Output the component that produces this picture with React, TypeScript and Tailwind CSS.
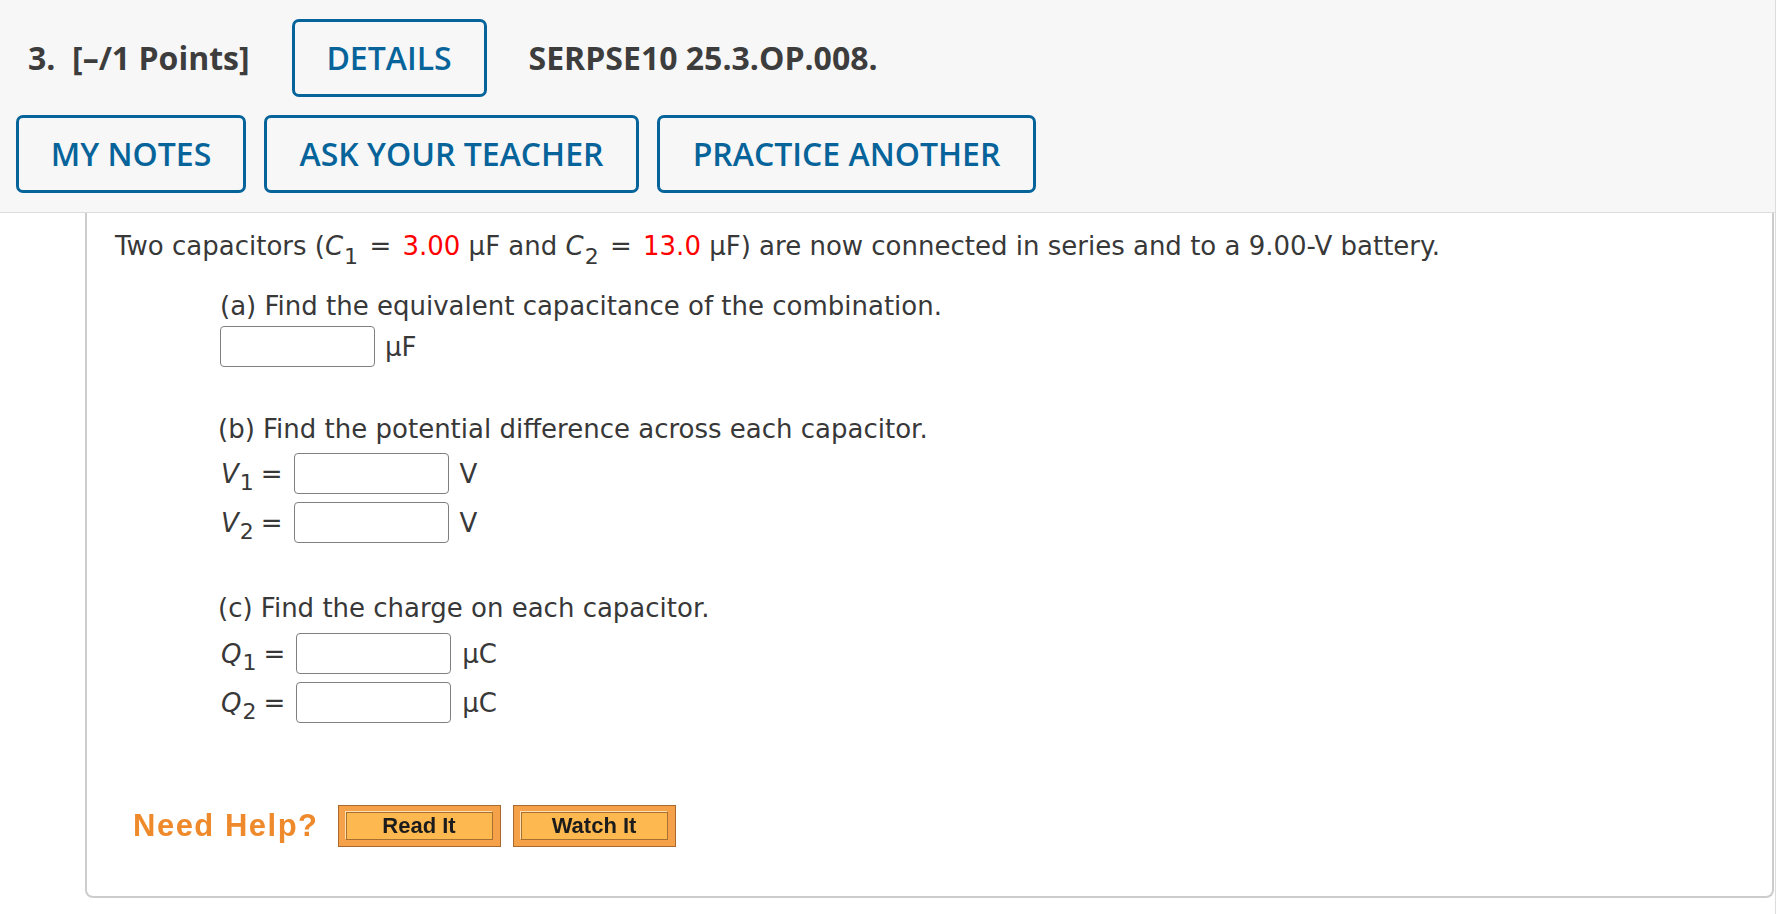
const Sub = ({ children }: { children: React.ReactNode }) => (
  <span className="relative top-[9px] ml-[1px] text-[22px] leading-none">
    {children}
  </span>
);

const Red = ({ children }: { children: React.ReactNode }) => (
  <span className="text-[#f00]">{children}</span>
);

const OutlineBtn = ({ label, w }: { label: string; w: string }) => (
  <button
    className={`${w} h-[78px] shrink-0 rounded-[7px] border-[3px] border-[#07649a] text-[32px] font-semibold text-[#07649a]`}
  >
    {label}
  </button>
);

const AnswerBox = () => (
  <input
    type="text"
    className="h-[41px] w-[155px] rounded-[4px] border-[1.5px] border-[#7f7f7f] bg-white outline-none"
  />
);

const MathRow = ({ sym, n, unit }: { sym: string; n: string; unit: string }) => (
  <div className="flex h-[41px] items-center">
    <span className="italic">{sym}</span>
    <Sub>{n}</Sub>
    <span className="ml-[7px] mr-[11px]">=</span>
    <AnswerBox />
    <span className="ml-[11px]">{unit}</span>
  </div>
);

const HelpBtn = ({ label }: { label: string }) => (
  <button className="h-[42px] w-[163px] shrink-0 border border-[#a9692c] bg-[#f5a14a] px-[7px] py-[6px]">
    <span className="flex h-full items-center justify-center border border-[#a8702f] bg-[#fdb94f] font-['Liberation_Sans',Arial,sans-serif] text-[22px] font-bold text-[#1c1c1c] shadow-[-1px_-1px_0_#ffe0b5] blur-[0.3px]">
      {label}
    </span>
  </button>
);

export default function App() {
  return (
    <div className="min-h-[914px] w-[1776px] border-r border-[#dcdcdc] bg-white">
      <header className="h-[213px] border-b border-[#dddddd] bg-[#f7f7f7] font-['Open_Sans',sans-serif]">
        <div className="flex items-center pt-[19px]">
          <span className="ml-[28px] whitespace-pre text-[32px] font-bold text-[#3d3d3d]">
            3.  [–/1 Points]
          </span>
          <div className="ml-[42px]">
            <OutlineBtn label="DETAILS" w="w-[195px]" />
          </div>
          <span className="ml-[42px] text-[32px] font-bold text-[#3d3d3d]">
            SERPSE10 25.3.OP.008.
          </span>
        </div>
        <div className="mt-[18px] flex gap-[18px] pl-[16px]">
          <OutlineBtn label="MY NOTES" w="w-[230px]" />
          <OutlineBtn label="ASK YOUR TEACHER" w="w-[375px]" />
          <OutlineBtn label="PRACTICE ANOTHER" w="w-[379px]" />
        </div>
      </header>

      <div className="ml-[85px] mr-[1px] h-[685px] rounded-b-[8px] border-x-2 border-b-2 border-[#cccccc] pl-[28px] pt-[15px] font-['DejaVu_Sans',Verdana,sans-serif] text-[26px] leading-[36px] text-[#383838]">
        <p>
          Two capacitors (<span className="italic">C</span>
          <Sub>1</Sub> <span className="mx-[3px]">=</span> <Red>3.00</Red> μF and{" "}
          <span className="italic">C</span>
          <Sub>2</Sub> <span className="mx-[3px]">=</span> <Red>13.0</Red> μF) are now
          connected in series and to a 9.00-V battery.
        </p>

        <div className="ml-[105px] mt-[24px]">
          <p>(a) Find the equivalent capacitance of the combination.</p>
          <div className="mt-[2px] flex h-[41px] items-center">
            <AnswerBox />
            <span className="ml-[10px]">μF</span>
          </div>
        </div>

        <div className="ml-[103px] mt-[44px]">
          <p>(b) Find the potential difference across each capacitor.</p>
          <div className="ml-[3px] mt-[6px] flex flex-col gap-[8px]">
            <MathRow sym="V" n="1" unit="V" />
            <MathRow sym="V" n="2" unit="V" />
          </div>
        </div>

        <div className="ml-[103px] mt-[47px]">
          <p>(c) Find the charge on each capacitor.</p>
          <div className="ml-[3px] mt-[7px] flex flex-col gap-[8px]">
            <MathRow sym="Q" n="1" unit="μC" />
            <MathRow sym="Q" n="2" unit="μC" />
          </div>
        </div>

        <div className="ml-[18px] mt-[82px] flex items-center">
          <span className="font-['Liberation_Sans',Arial,sans-serif] text-[31px] font-bold tracking-[1.5px] text-[#ef8a2c] blur-[0.4px]">
            Need Help?
          </span>
          <div className="ml-[19px] flex gap-[12px]">
            <HelpBtn label="Read It" />
            <HelpBtn label="Watch It" />
          </div>
        </div>
      </div>
    </div>
  );
}
